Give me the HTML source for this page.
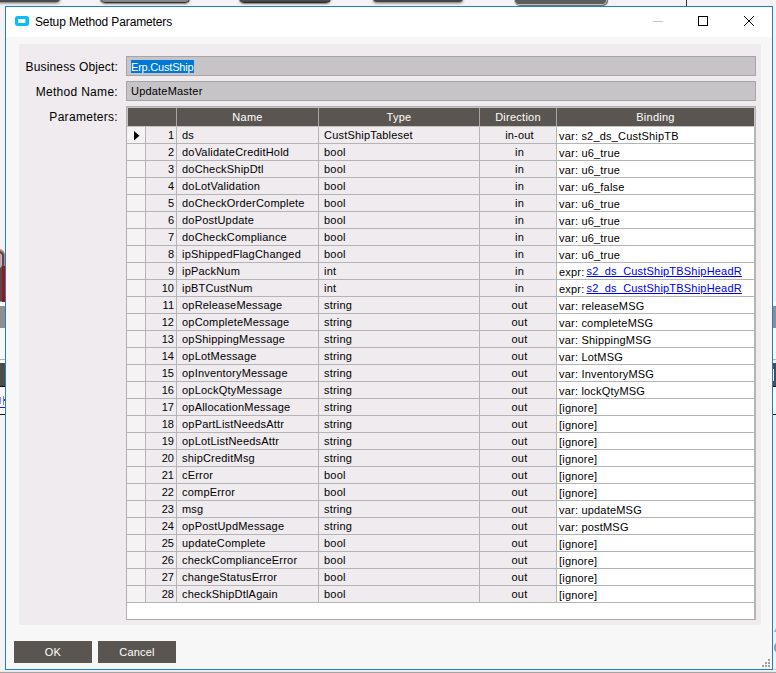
<!DOCTYPE html><html><head><meta charset="utf-8"><style>
*{margin:0;padding:0;box-sizing:border-box}
html,body{width:776px;height:673px;overflow:hidden;background:#f5f2f5;font-family:"Liberation Sans",sans-serif;position:relative}
.a{position:absolute}
.t{position:absolute;white-space:nowrap;font-size:11px;line-height:13px;color:#000;letter-spacing:0.2px}
.h{letter-spacing:0}
</style></head><body><div class="a" style="left:-5px;top:-3px;width:65px;height:5px;background:#4a4a4a;border-radius:0 0 4px 4px;box-shadow:0 1px 3px #606060;filter:blur(0.5px)"></div>
<div class="a" style="left:100px;top:-2px;width:90px;height:5px;background:linear-gradient(#999,#808080);border:1px solid #333;border-top:0;border-radius:0 0 5px 5px;box-shadow:0 1px 2px rgba(0,0,0,.55);filter:blur(0.4px)"></div>
<div class="a" style="left:239px;top:-2px;width:92px;height:5px;background:linear-gradient(#8a8a8a,#444 70%);border:1px solid #2a2a2a;border-top:0;border-radius:0 0 5px 5px;box-shadow:0 1px 2px rgba(0,0,0,.55);filter:blur(0.5px)"></div>
<div class="a" style="left:373px;top:-2px;width:90px;height:4px;background:#444;border-radius:0 0 6px 6px;box-shadow:0 1px 3px rgba(0,0,0,.6);filter:blur(0.6px)"></div>
<div class="a" style="left:514px;top:-2px;width:93px;height:7px;background:#5c5c5c;border:1px solid #bdbdbd;border-top:0;border-radius:0 0 5px 5px;box-shadow:1px 1px 1px rgba(0,0,0,.6)"></div>
<div class="a" style="left:686px;top:0px;width:1px;height:6px;background:#333"></div>
<div class="a" style="left:-4px;top:249px;width:9px;height:53px;background:#5e4547;border:1px solid #b88a8c;border-top-width:2px;border-radius:0 6px 0 0"></div>
<div class="a" style="left:-4px;top:253px;width:6px;height:15px;background:#b8a4a6;border:1px solid #d8b8ba;border-radius:3px"></div>
<div class="a" style="left:2px;top:266px;width:3px;height:36px;background:#9c1616"></div>
<div class="a" style="left:0px;top:302px;width:5px;height:4px;background:#fafafa"></div>
<div class="a" style="left:0px;top:306px;width:5px;height:22px;background:#8f8f8f"></div>
<div class="a" style="left:0px;top:328px;width:5px;height:31px;background:#f7f7f7"></div>
<div class="a" style="left:0px;top:359px;width:5px;height:1px;background:#b4b4b4"></div>
<div class="a" style="left:0px;top:360px;width:5px;height:3px;background:#fafafa"></div>
<div class="a" style="left:0px;top:363px;width:5px;height:23px;background:#4e4c4a"></div>
<div class="a" style="left:0px;top:386px;width:5px;height:1px;background:#111"></div>
<div class="a" style="left:0px;top:387px;width:5px;height:27px;background:#fbf9fa"></div>
<div class="a" style="left:0px;top:397px;width:1px;height:7px;background:#4a6aff;opacity:.7"></div>
<div class="a" style="left:3px;top:396px;width:1px;height:9px;background:#5a5aff;opacity:.8"></div>
<div class="a" style="left:4px;top:399px;width:1px;height:2px;background:#3030ff"></div>
<div class="a" style="left:0px;top:407px;width:5px;height:1px;background:#1a1aff"></div>
<div class="a" style="left:0px;top:414px;width:5px;height:1px;background:#111"></div>
<div class="a" style="left:773px;top:302px;width:3px;height:4px;background:#fff"></div>
<div class="a" style="left:773px;top:306px;width:3px;height:22px;background:#8f8f8f"></div>
<div class="a" style="left:773px;top:328px;width:3px;height:31px;background:#fafafa"></div>
<div class="a" style="left:773px;top:359px;width:3px;height:1px;background:#b4b4b4"></div>
<div class="a" style="left:773px;top:363px;width:3px;height:23px;background:#4e4c4a"></div>
<div class="a" style="left:773px;top:369px;width:1px;height:12px;background:#f0f0f0"></div>
<div class="a" style="left:773px;top:386px;width:3px;height:1px;background:#111"></div>
<div class="a" style="left:773px;top:387px;width:3px;height:27px;background:#fbf9fa"></div>
<div class="a" style="left:773px;top:414px;width:3px;height:1px;background:#111"></div>
<div class="a" style="left:0px;top:671px;width:776px;height:1px;background:#e8e8e8"></div>
<div class="a" style="left:0px;top:672px;width:776px;height:1px;background:#a4a4a4"></div>
<div class="a" style="left:773px;top:669px;width:3px;height:1px;background:#d4d4ee"></div>
<div class="a" style="left:774px;top:626px;width:3px;height:6px;background:#a8a8a8;clip-path:polygon(100% 0,0 100%,100% 100%);filter:blur(0.3px)"></div>
<div class="a" style="left:774px;top:643px;width:6px;height:9px;background:#9c9c9c;border-radius:50%;filter:blur(0.3px)"></div>
<div class="a" style="left:5px;top:6px;width:768px;height:664px;background:#f7f7f7;border:1px solid #1a7fd4"></div>
<div class="a" style="left:6px;top:7px;width:766px;height:30px;background:#fff"></div>
<svg class="a" style="left:15px;top:16px" width="14" height="10" viewBox="0 0 14 10"><rect x="0" y="0" width="14" height="10" rx="2.5" fill="#08bdf4"/><rect x="3.2" y="3" width="7.2" height="4" fill="#fff"/></svg>
<div class="t" style="left:35px;top:15px;font-size:12px;line-height:14px;letter-spacing:-0.13px">Setup Method Parameters</div>
<div class="a" style="left:653px;top:21px;width:10px;height:1px;background:#c4c4c4"></div>
<div class="a" style="left:698px;top:16px;width:10px;height:10px;border:1px solid #000"></div>
<svg class="a" style="left:743px;top:15px" width="12" height="12" viewBox="0 0 12 12"><path d="M1 1L11 11M11 1L1 11" stroke="#000" stroke-width="1"/></svg>
<div class="a" style="left:18px;top:43px;width:744px;height:583px;background:#efebee;border:1px solid #f9f8f9;border-radius:3px"></div>
<div class="t" style="left:0;width:118px;text-align:right;top:60px;font-size:12px;line-height:15px;letter-spacing:0.15px">Business Object:</div>
<div class="t" style="left:0;width:118px;text-align:right;top:85px;font-size:12px;line-height:15px;letter-spacing:0.3px">Method Name:</div>
<div class="t" style="left:0;width:118px;text-align:right;top:110px;font-size:12px;line-height:15px;letter-spacing:0.3px">Parameters:</div>
<div class="a" style="left:126px;top:56px;width:630px;height:20px;background:#c6c4c7;border:1px solid #a6a4a7"></div>
<div class="a" style="left:131px;top:60px;width:63px;height:13px;background:#0078d7"></div>
<div class="t" style="left:131px;top:61px;color:#fff;letter-spacing:-0.2px">Erp.CustShip</div>
<div class="a" style="left:126px;top:81px;width:630px;height:20px;background:#c6c4c7;border:1px solid #a6a4a7"></div>
<div class="t" style="left:131px;top:85px;">UpdateMaster</div>
<div class="a" style="left:126px;top:106px;width:630px;height:514px;background:#fff;border:1px solid #a9a9a9;border-top:1px solid #b0b0b0;border-left:1px solid #b0b0b0;border-right:2px solid #b5b5b5"></div>
<div class="a" style="left:127px;top:107px;width:628px;height:20px;background:#c4c5c3"></div>
<div class="a" style="left:128px;top:108px;width:626px;height:18px;background:#5b5551"></div>
<div class="a" style="left:176px;top:108px;width:1px;height:18px;background:#a8a6a4"></div>
<div class="a" style="left:318px;top:108px;width:1px;height:18px;background:#a8a6a4"></div>
<div class="a" style="left:479px;top:108px;width:1px;height:18px;background:#a8a6a4"></div>
<div class="a" style="left:556px;top:108px;width:1px;height:18px;background:#a8a6a4"></div>
<div class="t" style="left:177px;width:141px;text-align:center;top:111px;color:#fff;letter-spacing:0.25px">Name</div>
<div class="t" style="left:319px;width:160px;text-align:center;top:111px;color:#fff;letter-spacing:0.25px">Type</div>
<div class="t" style="left:480px;width:76px;text-align:center;top:111px;color:#fff;letter-spacing:0.25px">Direction</div>
<div class="t" style="left:557px;width:197px;text-align:center;top:111px;color:#fff;letter-spacing:0.25px">Binding</div>
<div class="a" style="left:127px;top:127px;width:18px;height:16px;background:#f5f3f4"></div>
<div class="a" style="left:146px;top:127px;width:30px;height:16px;background:#efebee"></div>
<div class="a" style="left:177px;top:127px;width:141px;height:16px;background:#efebee"></div>
<div class="a" style="left:319px;top:127px;width:160px;height:16px;background:#efebee"></div>
<div class="a" style="left:480px;top:127px;width:76px;height:16px;background:#efebee"></div>
<div class="a" style="left:127px;top:143px;width:627px;height:1px;background:#b4b4b4"></div>
<div class="a" style="left:145px;top:127px;width:1px;height:17px;background:#b4b4b4"></div>
<div class="a" style="left:176px;top:127px;width:1px;height:17px;background:#b4b4b4"></div>
<div class="a" style="left:318px;top:127px;width:1px;height:17px;background:#b4b4b4"></div>
<div class="a" style="left:479px;top:127px;width:1px;height:17px;background:#b4b4b4"></div>
<div class="a" style="left:556px;top:127px;width:1px;height:17px;background:#b4b4b4"></div>
<div class="t" style="left:146px;width:28px;text-align:right;top:129px;letter-spacing:0">1</div>
<div class="t" style="left:182px;top:129px;">ds</div>
<div class="t" style="left:324px;top:129px;">CustShipTableset</div>
<div class="t" style="left:480px;width:77px;text-align:center;top:129px;padding-left:2px">in-out</div>
<div class="t" style="left:559px;top:130px;">var: s2_ds_CustShipTB</div>
<div class="a" style="left:127px;top:144px;width:18px;height:16px;background:#f5f3f4"></div>
<div class="a" style="left:146px;top:144px;width:30px;height:16px;background:#efebee"></div>
<div class="a" style="left:177px;top:144px;width:141px;height:16px;background:#efebee"></div>
<div class="a" style="left:319px;top:144px;width:160px;height:16px;background:#efebee"></div>
<div class="a" style="left:480px;top:144px;width:76px;height:16px;background:#efebee"></div>
<div class="a" style="left:127px;top:160px;width:627px;height:1px;background:#b4b4b4"></div>
<div class="a" style="left:145px;top:144px;width:1px;height:17px;background:#b4b4b4"></div>
<div class="a" style="left:176px;top:144px;width:1px;height:17px;background:#b4b4b4"></div>
<div class="a" style="left:318px;top:144px;width:1px;height:17px;background:#b4b4b4"></div>
<div class="a" style="left:479px;top:144px;width:1px;height:17px;background:#b4b4b4"></div>
<div class="a" style="left:556px;top:144px;width:1px;height:17px;background:#b4b4b4"></div>
<div class="t" style="left:146px;width:28px;text-align:right;top:146px;letter-spacing:0">2</div>
<div class="t" style="left:182px;top:146px;">doValidateCreditHold</div>
<div class="t" style="left:324px;top:146px;">bool</div>
<div class="t" style="left:480px;width:77px;text-align:center;top:146px;padding-left:2px">in</div>
<div class="t" style="left:559px;top:147px;">var: u6_true</div>
<div class="a" style="left:127px;top:161px;width:18px;height:16px;background:#f5f3f4"></div>
<div class="a" style="left:146px;top:161px;width:30px;height:16px;background:#efebee"></div>
<div class="a" style="left:177px;top:161px;width:141px;height:16px;background:#efebee"></div>
<div class="a" style="left:319px;top:161px;width:160px;height:16px;background:#efebee"></div>
<div class="a" style="left:480px;top:161px;width:76px;height:16px;background:#efebee"></div>
<div class="a" style="left:127px;top:177px;width:627px;height:1px;background:#b4b4b4"></div>
<div class="a" style="left:145px;top:161px;width:1px;height:17px;background:#b4b4b4"></div>
<div class="a" style="left:176px;top:161px;width:1px;height:17px;background:#b4b4b4"></div>
<div class="a" style="left:318px;top:161px;width:1px;height:17px;background:#b4b4b4"></div>
<div class="a" style="left:479px;top:161px;width:1px;height:17px;background:#b4b4b4"></div>
<div class="a" style="left:556px;top:161px;width:1px;height:17px;background:#b4b4b4"></div>
<div class="t" style="left:146px;width:28px;text-align:right;top:163px;letter-spacing:0">3</div>
<div class="t" style="left:182px;top:163px;">doCheckShipDtl</div>
<div class="t" style="left:324px;top:163px;">bool</div>
<div class="t" style="left:480px;width:77px;text-align:center;top:163px;padding-left:2px">in</div>
<div class="t" style="left:559px;top:164px;">var: u6_true</div>
<div class="a" style="left:127px;top:178px;width:18px;height:16px;background:#f5f3f4"></div>
<div class="a" style="left:146px;top:178px;width:30px;height:16px;background:#efebee"></div>
<div class="a" style="left:177px;top:178px;width:141px;height:16px;background:#efebee"></div>
<div class="a" style="left:319px;top:178px;width:160px;height:16px;background:#efebee"></div>
<div class="a" style="left:480px;top:178px;width:76px;height:16px;background:#efebee"></div>
<div class="a" style="left:127px;top:194px;width:627px;height:1px;background:#b4b4b4"></div>
<div class="a" style="left:145px;top:178px;width:1px;height:17px;background:#b4b4b4"></div>
<div class="a" style="left:176px;top:178px;width:1px;height:17px;background:#b4b4b4"></div>
<div class="a" style="left:318px;top:178px;width:1px;height:17px;background:#b4b4b4"></div>
<div class="a" style="left:479px;top:178px;width:1px;height:17px;background:#b4b4b4"></div>
<div class="a" style="left:556px;top:178px;width:1px;height:17px;background:#b4b4b4"></div>
<div class="t" style="left:146px;width:28px;text-align:right;top:180px;letter-spacing:0">4</div>
<div class="t" style="left:182px;top:180px;">doLotValidation</div>
<div class="t" style="left:324px;top:180px;">bool</div>
<div class="t" style="left:480px;width:77px;text-align:center;top:180px;padding-left:2px">in</div>
<div class="t" style="left:559px;top:181px;">var: u6_false</div>
<div class="a" style="left:127px;top:195px;width:18px;height:16px;background:#f5f3f4"></div>
<div class="a" style="left:146px;top:195px;width:30px;height:16px;background:#efebee"></div>
<div class="a" style="left:177px;top:195px;width:141px;height:16px;background:#efebee"></div>
<div class="a" style="left:319px;top:195px;width:160px;height:16px;background:#efebee"></div>
<div class="a" style="left:480px;top:195px;width:76px;height:16px;background:#efebee"></div>
<div class="a" style="left:127px;top:211px;width:627px;height:1px;background:#b4b4b4"></div>
<div class="a" style="left:145px;top:195px;width:1px;height:17px;background:#b4b4b4"></div>
<div class="a" style="left:176px;top:195px;width:1px;height:17px;background:#b4b4b4"></div>
<div class="a" style="left:318px;top:195px;width:1px;height:17px;background:#b4b4b4"></div>
<div class="a" style="left:479px;top:195px;width:1px;height:17px;background:#b4b4b4"></div>
<div class="a" style="left:556px;top:195px;width:1px;height:17px;background:#b4b4b4"></div>
<div class="t" style="left:146px;width:28px;text-align:right;top:197px;letter-spacing:0">5</div>
<div class="t" style="left:182px;top:197px;">doCheckOrderComplete</div>
<div class="t" style="left:324px;top:197px;">bool</div>
<div class="t" style="left:480px;width:77px;text-align:center;top:197px;padding-left:2px">in</div>
<div class="t" style="left:559px;top:198px;">var: u6_true</div>
<div class="a" style="left:127px;top:212px;width:18px;height:16px;background:#f5f3f4"></div>
<div class="a" style="left:146px;top:212px;width:30px;height:16px;background:#efebee"></div>
<div class="a" style="left:177px;top:212px;width:141px;height:16px;background:#efebee"></div>
<div class="a" style="left:319px;top:212px;width:160px;height:16px;background:#efebee"></div>
<div class="a" style="left:480px;top:212px;width:76px;height:16px;background:#efebee"></div>
<div class="a" style="left:127px;top:228px;width:627px;height:1px;background:#b4b4b4"></div>
<div class="a" style="left:145px;top:212px;width:1px;height:17px;background:#b4b4b4"></div>
<div class="a" style="left:176px;top:212px;width:1px;height:17px;background:#b4b4b4"></div>
<div class="a" style="left:318px;top:212px;width:1px;height:17px;background:#b4b4b4"></div>
<div class="a" style="left:479px;top:212px;width:1px;height:17px;background:#b4b4b4"></div>
<div class="a" style="left:556px;top:212px;width:1px;height:17px;background:#b4b4b4"></div>
<div class="t" style="left:146px;width:28px;text-align:right;top:214px;letter-spacing:0">6</div>
<div class="t" style="left:182px;top:214px;">doPostUpdate</div>
<div class="t" style="left:324px;top:214px;">bool</div>
<div class="t" style="left:480px;width:77px;text-align:center;top:214px;padding-left:2px">in</div>
<div class="t" style="left:559px;top:215px;">var: u6_true</div>
<div class="a" style="left:127px;top:229px;width:18px;height:16px;background:#f5f3f4"></div>
<div class="a" style="left:146px;top:229px;width:30px;height:16px;background:#efebee"></div>
<div class="a" style="left:177px;top:229px;width:141px;height:16px;background:#efebee"></div>
<div class="a" style="left:319px;top:229px;width:160px;height:16px;background:#efebee"></div>
<div class="a" style="left:480px;top:229px;width:76px;height:16px;background:#efebee"></div>
<div class="a" style="left:127px;top:245px;width:627px;height:1px;background:#b4b4b4"></div>
<div class="a" style="left:145px;top:229px;width:1px;height:17px;background:#b4b4b4"></div>
<div class="a" style="left:176px;top:229px;width:1px;height:17px;background:#b4b4b4"></div>
<div class="a" style="left:318px;top:229px;width:1px;height:17px;background:#b4b4b4"></div>
<div class="a" style="left:479px;top:229px;width:1px;height:17px;background:#b4b4b4"></div>
<div class="a" style="left:556px;top:229px;width:1px;height:17px;background:#b4b4b4"></div>
<div class="t" style="left:146px;width:28px;text-align:right;top:231px;letter-spacing:0">7</div>
<div class="t" style="left:182px;top:231px;">doCheckCompliance</div>
<div class="t" style="left:324px;top:231px;">bool</div>
<div class="t" style="left:480px;width:77px;text-align:center;top:231px;padding-left:2px">in</div>
<div class="t" style="left:559px;top:232px;">var: u6_true</div>
<div class="a" style="left:127px;top:246px;width:18px;height:16px;background:#f5f3f4"></div>
<div class="a" style="left:146px;top:246px;width:30px;height:16px;background:#efebee"></div>
<div class="a" style="left:177px;top:246px;width:141px;height:16px;background:#efebee"></div>
<div class="a" style="left:319px;top:246px;width:160px;height:16px;background:#efebee"></div>
<div class="a" style="left:480px;top:246px;width:76px;height:16px;background:#efebee"></div>
<div class="a" style="left:127px;top:262px;width:627px;height:1px;background:#b4b4b4"></div>
<div class="a" style="left:145px;top:246px;width:1px;height:17px;background:#b4b4b4"></div>
<div class="a" style="left:176px;top:246px;width:1px;height:17px;background:#b4b4b4"></div>
<div class="a" style="left:318px;top:246px;width:1px;height:17px;background:#b4b4b4"></div>
<div class="a" style="left:479px;top:246px;width:1px;height:17px;background:#b4b4b4"></div>
<div class="a" style="left:556px;top:246px;width:1px;height:17px;background:#b4b4b4"></div>
<div class="t" style="left:146px;width:28px;text-align:right;top:248px;letter-spacing:0">8</div>
<div class="t" style="left:182px;top:248px;">ipShippedFlagChanged</div>
<div class="t" style="left:324px;top:248px;">bool</div>
<div class="t" style="left:480px;width:77px;text-align:center;top:248px;padding-left:2px">in</div>
<div class="t" style="left:559px;top:249px;">var: u6_true</div>
<div class="a" style="left:127px;top:263px;width:18px;height:16px;background:#f5f3f4"></div>
<div class="a" style="left:146px;top:263px;width:30px;height:16px;background:#efebee"></div>
<div class="a" style="left:177px;top:263px;width:141px;height:16px;background:#efebee"></div>
<div class="a" style="left:319px;top:263px;width:160px;height:16px;background:#efebee"></div>
<div class="a" style="left:480px;top:263px;width:76px;height:16px;background:#efebee"></div>
<div class="a" style="left:127px;top:279px;width:627px;height:1px;background:#b4b4b4"></div>
<div class="a" style="left:145px;top:263px;width:1px;height:17px;background:#b4b4b4"></div>
<div class="a" style="left:176px;top:263px;width:1px;height:17px;background:#b4b4b4"></div>
<div class="a" style="left:318px;top:263px;width:1px;height:17px;background:#b4b4b4"></div>
<div class="a" style="left:479px;top:263px;width:1px;height:17px;background:#b4b4b4"></div>
<div class="a" style="left:556px;top:263px;width:1px;height:17px;background:#b4b4b4"></div>
<div class="t" style="left:146px;width:28px;text-align:right;top:265px;letter-spacing:0">9</div>
<div class="t" style="left:182px;top:265px;">ipPackNum</div>
<div class="t" style="left:324px;top:265px;">int</div>
<div class="t" style="left:480px;width:77px;text-align:center;top:265px;padding-left:2px">in</div>
<div class="t" style="left:559px;top:266px;">expr:<span style="color:#0000f0;text-decoration:underline;margin-left:2px;position:relative;top:-1px">s2_ds_CustShipTBShipHeadR</span></div>
<div class="a" style="left:127px;top:280px;width:18px;height:16px;background:#f5f3f4"></div>
<div class="a" style="left:146px;top:280px;width:30px;height:16px;background:#efebee"></div>
<div class="a" style="left:177px;top:280px;width:141px;height:16px;background:#efebee"></div>
<div class="a" style="left:319px;top:280px;width:160px;height:16px;background:#efebee"></div>
<div class="a" style="left:480px;top:280px;width:76px;height:16px;background:#efebee"></div>
<div class="a" style="left:127px;top:296px;width:627px;height:1px;background:#b4b4b4"></div>
<div class="a" style="left:145px;top:280px;width:1px;height:17px;background:#b4b4b4"></div>
<div class="a" style="left:176px;top:280px;width:1px;height:17px;background:#b4b4b4"></div>
<div class="a" style="left:318px;top:280px;width:1px;height:17px;background:#b4b4b4"></div>
<div class="a" style="left:479px;top:280px;width:1px;height:17px;background:#b4b4b4"></div>
<div class="a" style="left:556px;top:280px;width:1px;height:17px;background:#b4b4b4"></div>
<div class="t" style="left:146px;width:28px;text-align:right;top:282px;letter-spacing:0">10</div>
<div class="t" style="left:182px;top:282px;">ipBTCustNum</div>
<div class="t" style="left:324px;top:282px;">int</div>
<div class="t" style="left:480px;width:77px;text-align:center;top:282px;padding-left:2px">in</div>
<div class="t" style="left:559px;top:283px;">expr:<span style="color:#0000f0;text-decoration:underline;margin-left:2px;position:relative;top:-1px">s2_ds_CustShipTBShipHeadR</span></div>
<div class="a" style="left:127px;top:297px;width:18px;height:16px;background:#f5f3f4"></div>
<div class="a" style="left:146px;top:297px;width:30px;height:16px;background:#efebee"></div>
<div class="a" style="left:177px;top:297px;width:141px;height:16px;background:#efebee"></div>
<div class="a" style="left:319px;top:297px;width:160px;height:16px;background:#efebee"></div>
<div class="a" style="left:480px;top:297px;width:76px;height:16px;background:#efebee"></div>
<div class="a" style="left:127px;top:313px;width:627px;height:1px;background:#b4b4b4"></div>
<div class="a" style="left:145px;top:297px;width:1px;height:17px;background:#b4b4b4"></div>
<div class="a" style="left:176px;top:297px;width:1px;height:17px;background:#b4b4b4"></div>
<div class="a" style="left:318px;top:297px;width:1px;height:17px;background:#b4b4b4"></div>
<div class="a" style="left:479px;top:297px;width:1px;height:17px;background:#b4b4b4"></div>
<div class="a" style="left:556px;top:297px;width:1px;height:17px;background:#b4b4b4"></div>
<div class="t" style="left:146px;width:28px;text-align:right;top:299px;letter-spacing:0">11</div>
<div class="t" style="left:182px;top:299px;">opReleaseMessage</div>
<div class="t" style="left:324px;top:299px;">string</div>
<div class="t" style="left:480px;width:77px;text-align:center;top:299px;padding-left:2px">out</div>
<div class="t" style="left:559px;top:300px;">var: releaseMSG</div>
<div class="a" style="left:127px;top:314px;width:18px;height:16px;background:#f5f3f4"></div>
<div class="a" style="left:146px;top:314px;width:30px;height:16px;background:#efebee"></div>
<div class="a" style="left:177px;top:314px;width:141px;height:16px;background:#efebee"></div>
<div class="a" style="left:319px;top:314px;width:160px;height:16px;background:#efebee"></div>
<div class="a" style="left:480px;top:314px;width:76px;height:16px;background:#efebee"></div>
<div class="a" style="left:127px;top:330px;width:627px;height:1px;background:#b4b4b4"></div>
<div class="a" style="left:145px;top:314px;width:1px;height:17px;background:#b4b4b4"></div>
<div class="a" style="left:176px;top:314px;width:1px;height:17px;background:#b4b4b4"></div>
<div class="a" style="left:318px;top:314px;width:1px;height:17px;background:#b4b4b4"></div>
<div class="a" style="left:479px;top:314px;width:1px;height:17px;background:#b4b4b4"></div>
<div class="a" style="left:556px;top:314px;width:1px;height:17px;background:#b4b4b4"></div>
<div class="t" style="left:146px;width:28px;text-align:right;top:316px;letter-spacing:0">12</div>
<div class="t" style="left:182px;top:316px;">opCompleteMessage</div>
<div class="t" style="left:324px;top:316px;">string</div>
<div class="t" style="left:480px;width:77px;text-align:center;top:316px;padding-left:2px">out</div>
<div class="t" style="left:559px;top:317px;">var: completeMSG</div>
<div class="a" style="left:127px;top:331px;width:18px;height:16px;background:#f5f3f4"></div>
<div class="a" style="left:146px;top:331px;width:30px;height:16px;background:#efebee"></div>
<div class="a" style="left:177px;top:331px;width:141px;height:16px;background:#efebee"></div>
<div class="a" style="left:319px;top:331px;width:160px;height:16px;background:#efebee"></div>
<div class="a" style="left:480px;top:331px;width:76px;height:16px;background:#efebee"></div>
<div class="a" style="left:127px;top:347px;width:627px;height:1px;background:#b4b4b4"></div>
<div class="a" style="left:145px;top:331px;width:1px;height:17px;background:#b4b4b4"></div>
<div class="a" style="left:176px;top:331px;width:1px;height:17px;background:#b4b4b4"></div>
<div class="a" style="left:318px;top:331px;width:1px;height:17px;background:#b4b4b4"></div>
<div class="a" style="left:479px;top:331px;width:1px;height:17px;background:#b4b4b4"></div>
<div class="a" style="left:556px;top:331px;width:1px;height:17px;background:#b4b4b4"></div>
<div class="t" style="left:146px;width:28px;text-align:right;top:333px;letter-spacing:0">13</div>
<div class="t" style="left:182px;top:333px;">opShippingMessage</div>
<div class="t" style="left:324px;top:333px;">string</div>
<div class="t" style="left:480px;width:77px;text-align:center;top:333px;padding-left:2px">out</div>
<div class="t" style="left:559px;top:334px;">var: ShippingMSG</div>
<div class="a" style="left:127px;top:348px;width:18px;height:16px;background:#f5f3f4"></div>
<div class="a" style="left:146px;top:348px;width:30px;height:16px;background:#efebee"></div>
<div class="a" style="left:177px;top:348px;width:141px;height:16px;background:#efebee"></div>
<div class="a" style="left:319px;top:348px;width:160px;height:16px;background:#efebee"></div>
<div class="a" style="left:480px;top:348px;width:76px;height:16px;background:#efebee"></div>
<div class="a" style="left:127px;top:364px;width:627px;height:1px;background:#b4b4b4"></div>
<div class="a" style="left:145px;top:348px;width:1px;height:17px;background:#b4b4b4"></div>
<div class="a" style="left:176px;top:348px;width:1px;height:17px;background:#b4b4b4"></div>
<div class="a" style="left:318px;top:348px;width:1px;height:17px;background:#b4b4b4"></div>
<div class="a" style="left:479px;top:348px;width:1px;height:17px;background:#b4b4b4"></div>
<div class="a" style="left:556px;top:348px;width:1px;height:17px;background:#b4b4b4"></div>
<div class="t" style="left:146px;width:28px;text-align:right;top:350px;letter-spacing:0">14</div>
<div class="t" style="left:182px;top:350px;">opLotMessage</div>
<div class="t" style="left:324px;top:350px;">string</div>
<div class="t" style="left:480px;width:77px;text-align:center;top:350px;padding-left:2px">out</div>
<div class="t" style="left:559px;top:351px;">var: LotMSG</div>
<div class="a" style="left:127px;top:365px;width:18px;height:16px;background:#f5f3f4"></div>
<div class="a" style="left:146px;top:365px;width:30px;height:16px;background:#efebee"></div>
<div class="a" style="left:177px;top:365px;width:141px;height:16px;background:#efebee"></div>
<div class="a" style="left:319px;top:365px;width:160px;height:16px;background:#efebee"></div>
<div class="a" style="left:480px;top:365px;width:76px;height:16px;background:#efebee"></div>
<div class="a" style="left:127px;top:381px;width:627px;height:1px;background:#b4b4b4"></div>
<div class="a" style="left:145px;top:365px;width:1px;height:17px;background:#b4b4b4"></div>
<div class="a" style="left:176px;top:365px;width:1px;height:17px;background:#b4b4b4"></div>
<div class="a" style="left:318px;top:365px;width:1px;height:17px;background:#b4b4b4"></div>
<div class="a" style="left:479px;top:365px;width:1px;height:17px;background:#b4b4b4"></div>
<div class="a" style="left:556px;top:365px;width:1px;height:17px;background:#b4b4b4"></div>
<div class="t" style="left:146px;width:28px;text-align:right;top:367px;letter-spacing:0">15</div>
<div class="t" style="left:182px;top:367px;">opInventoryMessage</div>
<div class="t" style="left:324px;top:367px;">string</div>
<div class="t" style="left:480px;width:77px;text-align:center;top:367px;padding-left:2px">out</div>
<div class="t" style="left:559px;top:368px;">var: InventoryMSG</div>
<div class="a" style="left:127px;top:382px;width:18px;height:16px;background:#f5f3f4"></div>
<div class="a" style="left:146px;top:382px;width:30px;height:16px;background:#efebee"></div>
<div class="a" style="left:177px;top:382px;width:141px;height:16px;background:#efebee"></div>
<div class="a" style="left:319px;top:382px;width:160px;height:16px;background:#efebee"></div>
<div class="a" style="left:480px;top:382px;width:76px;height:16px;background:#efebee"></div>
<div class="a" style="left:127px;top:398px;width:627px;height:1px;background:#b4b4b4"></div>
<div class="a" style="left:145px;top:382px;width:1px;height:17px;background:#b4b4b4"></div>
<div class="a" style="left:176px;top:382px;width:1px;height:17px;background:#b4b4b4"></div>
<div class="a" style="left:318px;top:382px;width:1px;height:17px;background:#b4b4b4"></div>
<div class="a" style="left:479px;top:382px;width:1px;height:17px;background:#b4b4b4"></div>
<div class="a" style="left:556px;top:382px;width:1px;height:17px;background:#b4b4b4"></div>
<div class="t" style="left:146px;width:28px;text-align:right;top:384px;letter-spacing:0">16</div>
<div class="t" style="left:182px;top:384px;">opLockQtyMessage</div>
<div class="t" style="left:324px;top:384px;">string</div>
<div class="t" style="left:480px;width:77px;text-align:center;top:384px;padding-left:2px">out</div>
<div class="t" style="left:559px;top:385px;">var: lockQtyMSG</div>
<div class="a" style="left:127px;top:399px;width:18px;height:16px;background:#f5f3f4"></div>
<div class="a" style="left:146px;top:399px;width:30px;height:16px;background:#efebee"></div>
<div class="a" style="left:177px;top:399px;width:141px;height:16px;background:#efebee"></div>
<div class="a" style="left:319px;top:399px;width:160px;height:16px;background:#efebee"></div>
<div class="a" style="left:480px;top:399px;width:76px;height:16px;background:#efebee"></div>
<div class="a" style="left:127px;top:415px;width:627px;height:1px;background:#b4b4b4"></div>
<div class="a" style="left:145px;top:399px;width:1px;height:17px;background:#b4b4b4"></div>
<div class="a" style="left:176px;top:399px;width:1px;height:17px;background:#b4b4b4"></div>
<div class="a" style="left:318px;top:399px;width:1px;height:17px;background:#b4b4b4"></div>
<div class="a" style="left:479px;top:399px;width:1px;height:17px;background:#b4b4b4"></div>
<div class="a" style="left:556px;top:399px;width:1px;height:17px;background:#b4b4b4"></div>
<div class="t" style="left:146px;width:28px;text-align:right;top:401px;letter-spacing:0">17</div>
<div class="t" style="left:182px;top:401px;">opAllocationMessage</div>
<div class="t" style="left:324px;top:401px;">string</div>
<div class="t" style="left:480px;width:77px;text-align:center;top:401px;padding-left:2px">out</div>
<div class="t" style="left:559px;top:402px;">[ignore]</div>
<div class="a" style="left:127px;top:416px;width:18px;height:16px;background:#f5f3f4"></div>
<div class="a" style="left:146px;top:416px;width:30px;height:16px;background:#efebee"></div>
<div class="a" style="left:177px;top:416px;width:141px;height:16px;background:#efebee"></div>
<div class="a" style="left:319px;top:416px;width:160px;height:16px;background:#efebee"></div>
<div class="a" style="left:480px;top:416px;width:76px;height:16px;background:#efebee"></div>
<div class="a" style="left:127px;top:432px;width:627px;height:1px;background:#b4b4b4"></div>
<div class="a" style="left:145px;top:416px;width:1px;height:17px;background:#b4b4b4"></div>
<div class="a" style="left:176px;top:416px;width:1px;height:17px;background:#b4b4b4"></div>
<div class="a" style="left:318px;top:416px;width:1px;height:17px;background:#b4b4b4"></div>
<div class="a" style="left:479px;top:416px;width:1px;height:17px;background:#b4b4b4"></div>
<div class="a" style="left:556px;top:416px;width:1px;height:17px;background:#b4b4b4"></div>
<div class="t" style="left:146px;width:28px;text-align:right;top:418px;letter-spacing:0">18</div>
<div class="t" style="left:182px;top:418px;">opPartListNeedsAttr</div>
<div class="t" style="left:324px;top:418px;">string</div>
<div class="t" style="left:480px;width:77px;text-align:center;top:418px;padding-left:2px">out</div>
<div class="t" style="left:559px;top:419px;">[ignore]</div>
<div class="a" style="left:127px;top:433px;width:18px;height:16px;background:#f5f3f4"></div>
<div class="a" style="left:146px;top:433px;width:30px;height:16px;background:#efebee"></div>
<div class="a" style="left:177px;top:433px;width:141px;height:16px;background:#efebee"></div>
<div class="a" style="left:319px;top:433px;width:160px;height:16px;background:#efebee"></div>
<div class="a" style="left:480px;top:433px;width:76px;height:16px;background:#efebee"></div>
<div class="a" style="left:127px;top:449px;width:627px;height:1px;background:#b4b4b4"></div>
<div class="a" style="left:145px;top:433px;width:1px;height:17px;background:#b4b4b4"></div>
<div class="a" style="left:176px;top:433px;width:1px;height:17px;background:#b4b4b4"></div>
<div class="a" style="left:318px;top:433px;width:1px;height:17px;background:#b4b4b4"></div>
<div class="a" style="left:479px;top:433px;width:1px;height:17px;background:#b4b4b4"></div>
<div class="a" style="left:556px;top:433px;width:1px;height:17px;background:#b4b4b4"></div>
<div class="t" style="left:146px;width:28px;text-align:right;top:435px;letter-spacing:0">19</div>
<div class="t" style="left:182px;top:435px;">opLotListNeedsAttr</div>
<div class="t" style="left:324px;top:435px;">string</div>
<div class="t" style="left:480px;width:77px;text-align:center;top:435px;padding-left:2px">out</div>
<div class="t" style="left:559px;top:436px;">[ignore]</div>
<div class="a" style="left:127px;top:450px;width:18px;height:16px;background:#f5f3f4"></div>
<div class="a" style="left:146px;top:450px;width:30px;height:16px;background:#efebee"></div>
<div class="a" style="left:177px;top:450px;width:141px;height:16px;background:#efebee"></div>
<div class="a" style="left:319px;top:450px;width:160px;height:16px;background:#efebee"></div>
<div class="a" style="left:480px;top:450px;width:76px;height:16px;background:#efebee"></div>
<div class="a" style="left:127px;top:466px;width:627px;height:1px;background:#b4b4b4"></div>
<div class="a" style="left:145px;top:450px;width:1px;height:17px;background:#b4b4b4"></div>
<div class="a" style="left:176px;top:450px;width:1px;height:17px;background:#b4b4b4"></div>
<div class="a" style="left:318px;top:450px;width:1px;height:17px;background:#b4b4b4"></div>
<div class="a" style="left:479px;top:450px;width:1px;height:17px;background:#b4b4b4"></div>
<div class="a" style="left:556px;top:450px;width:1px;height:17px;background:#b4b4b4"></div>
<div class="t" style="left:146px;width:28px;text-align:right;top:452px;letter-spacing:0">20</div>
<div class="t" style="left:182px;top:452px;">shipCreditMsg</div>
<div class="t" style="left:324px;top:452px;">string</div>
<div class="t" style="left:480px;width:77px;text-align:center;top:452px;padding-left:2px">out</div>
<div class="t" style="left:559px;top:453px;">[ignore]</div>
<div class="a" style="left:127px;top:467px;width:18px;height:16px;background:#f5f3f4"></div>
<div class="a" style="left:146px;top:467px;width:30px;height:16px;background:#efebee"></div>
<div class="a" style="left:177px;top:467px;width:141px;height:16px;background:#efebee"></div>
<div class="a" style="left:319px;top:467px;width:160px;height:16px;background:#efebee"></div>
<div class="a" style="left:480px;top:467px;width:76px;height:16px;background:#efebee"></div>
<div class="a" style="left:127px;top:483px;width:627px;height:1px;background:#b4b4b4"></div>
<div class="a" style="left:145px;top:467px;width:1px;height:17px;background:#b4b4b4"></div>
<div class="a" style="left:176px;top:467px;width:1px;height:17px;background:#b4b4b4"></div>
<div class="a" style="left:318px;top:467px;width:1px;height:17px;background:#b4b4b4"></div>
<div class="a" style="left:479px;top:467px;width:1px;height:17px;background:#b4b4b4"></div>
<div class="a" style="left:556px;top:467px;width:1px;height:17px;background:#b4b4b4"></div>
<div class="t" style="left:146px;width:28px;text-align:right;top:469px;letter-spacing:0">21</div>
<div class="t" style="left:182px;top:469px;">cError</div>
<div class="t" style="left:324px;top:469px;">bool</div>
<div class="t" style="left:480px;width:77px;text-align:center;top:469px;padding-left:2px">out</div>
<div class="t" style="left:559px;top:470px;">[ignore]</div>
<div class="a" style="left:127px;top:484px;width:18px;height:16px;background:#f5f3f4"></div>
<div class="a" style="left:146px;top:484px;width:30px;height:16px;background:#efebee"></div>
<div class="a" style="left:177px;top:484px;width:141px;height:16px;background:#efebee"></div>
<div class="a" style="left:319px;top:484px;width:160px;height:16px;background:#efebee"></div>
<div class="a" style="left:480px;top:484px;width:76px;height:16px;background:#efebee"></div>
<div class="a" style="left:127px;top:500px;width:627px;height:1px;background:#b4b4b4"></div>
<div class="a" style="left:145px;top:484px;width:1px;height:17px;background:#b4b4b4"></div>
<div class="a" style="left:176px;top:484px;width:1px;height:17px;background:#b4b4b4"></div>
<div class="a" style="left:318px;top:484px;width:1px;height:17px;background:#b4b4b4"></div>
<div class="a" style="left:479px;top:484px;width:1px;height:17px;background:#b4b4b4"></div>
<div class="a" style="left:556px;top:484px;width:1px;height:17px;background:#b4b4b4"></div>
<div class="t" style="left:146px;width:28px;text-align:right;top:486px;letter-spacing:0">22</div>
<div class="t" style="left:182px;top:486px;">compError</div>
<div class="t" style="left:324px;top:486px;">bool</div>
<div class="t" style="left:480px;width:77px;text-align:center;top:486px;padding-left:2px">out</div>
<div class="t" style="left:559px;top:487px;">[ignore]</div>
<div class="a" style="left:127px;top:501px;width:18px;height:16px;background:#f5f3f4"></div>
<div class="a" style="left:146px;top:501px;width:30px;height:16px;background:#efebee"></div>
<div class="a" style="left:177px;top:501px;width:141px;height:16px;background:#efebee"></div>
<div class="a" style="left:319px;top:501px;width:160px;height:16px;background:#efebee"></div>
<div class="a" style="left:480px;top:501px;width:76px;height:16px;background:#efebee"></div>
<div class="a" style="left:127px;top:517px;width:627px;height:1px;background:#b4b4b4"></div>
<div class="a" style="left:145px;top:501px;width:1px;height:17px;background:#b4b4b4"></div>
<div class="a" style="left:176px;top:501px;width:1px;height:17px;background:#b4b4b4"></div>
<div class="a" style="left:318px;top:501px;width:1px;height:17px;background:#b4b4b4"></div>
<div class="a" style="left:479px;top:501px;width:1px;height:17px;background:#b4b4b4"></div>
<div class="a" style="left:556px;top:501px;width:1px;height:17px;background:#b4b4b4"></div>
<div class="t" style="left:146px;width:28px;text-align:right;top:503px;letter-spacing:0">23</div>
<div class="t" style="left:182px;top:503px;">msg</div>
<div class="t" style="left:324px;top:503px;">string</div>
<div class="t" style="left:480px;width:77px;text-align:center;top:503px;padding-left:2px">out</div>
<div class="t" style="left:559px;top:504px;">var: updateMSG</div>
<div class="a" style="left:127px;top:518px;width:18px;height:16px;background:#f5f3f4"></div>
<div class="a" style="left:146px;top:518px;width:30px;height:16px;background:#efebee"></div>
<div class="a" style="left:177px;top:518px;width:141px;height:16px;background:#efebee"></div>
<div class="a" style="left:319px;top:518px;width:160px;height:16px;background:#efebee"></div>
<div class="a" style="left:480px;top:518px;width:76px;height:16px;background:#efebee"></div>
<div class="a" style="left:127px;top:534px;width:627px;height:1px;background:#b4b4b4"></div>
<div class="a" style="left:145px;top:518px;width:1px;height:17px;background:#b4b4b4"></div>
<div class="a" style="left:176px;top:518px;width:1px;height:17px;background:#b4b4b4"></div>
<div class="a" style="left:318px;top:518px;width:1px;height:17px;background:#b4b4b4"></div>
<div class="a" style="left:479px;top:518px;width:1px;height:17px;background:#b4b4b4"></div>
<div class="a" style="left:556px;top:518px;width:1px;height:17px;background:#b4b4b4"></div>
<div class="t" style="left:146px;width:28px;text-align:right;top:520px;letter-spacing:0">24</div>
<div class="t" style="left:182px;top:520px;">opPostUpdMessage</div>
<div class="t" style="left:324px;top:520px;">string</div>
<div class="t" style="left:480px;width:77px;text-align:center;top:520px;padding-left:2px">out</div>
<div class="t" style="left:559px;top:521px;">var: postMSG</div>
<div class="a" style="left:127px;top:535px;width:18px;height:16px;background:#f5f3f4"></div>
<div class="a" style="left:146px;top:535px;width:30px;height:16px;background:#efebee"></div>
<div class="a" style="left:177px;top:535px;width:141px;height:16px;background:#efebee"></div>
<div class="a" style="left:319px;top:535px;width:160px;height:16px;background:#efebee"></div>
<div class="a" style="left:480px;top:535px;width:76px;height:16px;background:#efebee"></div>
<div class="a" style="left:127px;top:551px;width:627px;height:1px;background:#b4b4b4"></div>
<div class="a" style="left:145px;top:535px;width:1px;height:17px;background:#b4b4b4"></div>
<div class="a" style="left:176px;top:535px;width:1px;height:17px;background:#b4b4b4"></div>
<div class="a" style="left:318px;top:535px;width:1px;height:17px;background:#b4b4b4"></div>
<div class="a" style="left:479px;top:535px;width:1px;height:17px;background:#b4b4b4"></div>
<div class="a" style="left:556px;top:535px;width:1px;height:17px;background:#b4b4b4"></div>
<div class="t" style="left:146px;width:28px;text-align:right;top:537px;letter-spacing:0">25</div>
<div class="t" style="left:182px;top:537px;">updateComplete</div>
<div class="t" style="left:324px;top:537px;">bool</div>
<div class="t" style="left:480px;width:77px;text-align:center;top:537px;padding-left:2px">out</div>
<div class="t" style="left:559px;top:538px;">[ignore]</div>
<div class="a" style="left:127px;top:552px;width:18px;height:16px;background:#f5f3f4"></div>
<div class="a" style="left:146px;top:552px;width:30px;height:16px;background:#efebee"></div>
<div class="a" style="left:177px;top:552px;width:141px;height:16px;background:#efebee"></div>
<div class="a" style="left:319px;top:552px;width:160px;height:16px;background:#efebee"></div>
<div class="a" style="left:480px;top:552px;width:76px;height:16px;background:#efebee"></div>
<div class="a" style="left:127px;top:568px;width:627px;height:1px;background:#b4b4b4"></div>
<div class="a" style="left:145px;top:552px;width:1px;height:17px;background:#b4b4b4"></div>
<div class="a" style="left:176px;top:552px;width:1px;height:17px;background:#b4b4b4"></div>
<div class="a" style="left:318px;top:552px;width:1px;height:17px;background:#b4b4b4"></div>
<div class="a" style="left:479px;top:552px;width:1px;height:17px;background:#b4b4b4"></div>
<div class="a" style="left:556px;top:552px;width:1px;height:17px;background:#b4b4b4"></div>
<div class="t" style="left:146px;width:28px;text-align:right;top:554px;letter-spacing:0">26</div>
<div class="t" style="left:182px;top:554px;">checkComplianceError</div>
<div class="t" style="left:324px;top:554px;">bool</div>
<div class="t" style="left:480px;width:77px;text-align:center;top:554px;padding-left:2px">out</div>
<div class="t" style="left:559px;top:555px;">[ignore]</div>
<div class="a" style="left:127px;top:569px;width:18px;height:16px;background:#f5f3f4"></div>
<div class="a" style="left:146px;top:569px;width:30px;height:16px;background:#efebee"></div>
<div class="a" style="left:177px;top:569px;width:141px;height:16px;background:#efebee"></div>
<div class="a" style="left:319px;top:569px;width:160px;height:16px;background:#efebee"></div>
<div class="a" style="left:480px;top:569px;width:76px;height:16px;background:#efebee"></div>
<div class="a" style="left:127px;top:585px;width:627px;height:1px;background:#b4b4b4"></div>
<div class="a" style="left:145px;top:569px;width:1px;height:17px;background:#b4b4b4"></div>
<div class="a" style="left:176px;top:569px;width:1px;height:17px;background:#b4b4b4"></div>
<div class="a" style="left:318px;top:569px;width:1px;height:17px;background:#b4b4b4"></div>
<div class="a" style="left:479px;top:569px;width:1px;height:17px;background:#b4b4b4"></div>
<div class="a" style="left:556px;top:569px;width:1px;height:17px;background:#b4b4b4"></div>
<div class="t" style="left:146px;width:28px;text-align:right;top:571px;letter-spacing:0">27</div>
<div class="t" style="left:182px;top:571px;">changeStatusError</div>
<div class="t" style="left:324px;top:571px;">bool</div>
<div class="t" style="left:480px;width:77px;text-align:center;top:571px;padding-left:2px">out</div>
<div class="t" style="left:559px;top:572px;">[ignore]</div>
<div class="a" style="left:127px;top:586px;width:18px;height:16px;background:#f5f3f4"></div>
<div class="a" style="left:146px;top:586px;width:30px;height:16px;background:#efebee"></div>
<div class="a" style="left:177px;top:586px;width:141px;height:16px;background:#efebee"></div>
<div class="a" style="left:319px;top:586px;width:160px;height:16px;background:#efebee"></div>
<div class="a" style="left:480px;top:586px;width:76px;height:16px;background:#efebee"></div>
<div class="a" style="left:127px;top:602px;width:627px;height:1px;background:#b4b4b4"></div>
<div class="a" style="left:145px;top:586px;width:1px;height:17px;background:#b4b4b4"></div>
<div class="a" style="left:176px;top:586px;width:1px;height:17px;background:#b4b4b4"></div>
<div class="a" style="left:318px;top:586px;width:1px;height:17px;background:#b4b4b4"></div>
<div class="a" style="left:479px;top:586px;width:1px;height:17px;background:#b4b4b4"></div>
<div class="a" style="left:556px;top:586px;width:1px;height:17px;background:#b4b4b4"></div>
<div class="t" style="left:146px;width:28px;text-align:right;top:588px;letter-spacing:0">28</div>
<div class="t" style="left:182px;top:588px;">checkShipDtlAgain</div>
<div class="t" style="left:324px;top:588px;">bool</div>
<div class="t" style="left:480px;width:77px;text-align:center;top:588px;padding-left:2px">out</div>
<div class="t" style="left:559px;top:589px;">[ignore]</div>
<svg class="a" style="left:134px;top:131px" width="6" height="10" viewBox="0 0 6 10"><path d="M0 0L5.5 4.75L0 9.5Z" fill="#000"/></svg>
<div class="a" style="left:14px;top:641px;width:78px;height:22px;background:#5b5551"></div>
<div class="t" style="left:14px;width:78px;text-align:center;top:645px;color:#fff;font-size:11px;line-height:14px;letter-spacing:0.3px">OK</div>
<div class="a" style="left:98px;top:641px;width:78px;height:22px;background:#5b5551"></div>
<div class="t" style="left:98px;width:78px;text-align:center;top:645px;color:#fff;font-size:11px;line-height:14px;letter-spacing:0.2px">Cancel</div>
<div class="a" style="left:768px;top:659px;width:2px;height:2px;background:#a0a0a0"></div>
<div class="a" style="left:765px;top:662px;width:2px;height:2px;background:#a0a0a0"></div>
<div class="a" style="left:768px;top:662px;width:2px;height:2px;background:#a0a0a0"></div>
<div class="a" style="left:762px;top:665px;width:2px;height:2px;background:#a0a0a0"></div>
<div class="a" style="left:765px;top:665px;width:2px;height:2px;background:#a0a0a0"></div>
<div class="a" style="left:768px;top:665px;width:2px;height:2px;background:#a0a0a0"></div></body></html>
